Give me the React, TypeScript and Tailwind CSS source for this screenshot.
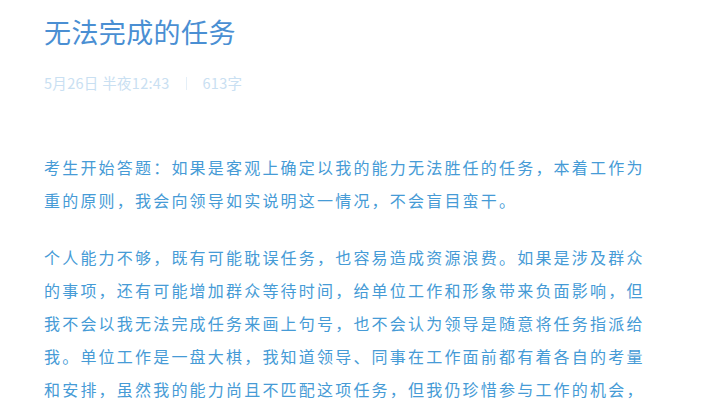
const paragraphs = [
  '考生开始答题：如果是客观上确定以我的能力无法胜任的任务，本着工作为重的原则，我会向领导如实说明这一情况，不会盲目蛮干。',
  '个人能力不够，既有可能耽误任务，也容易造成资源浪费。如果是涉及群众的事项，还有可能增加群众等待时间，给单位工作和形象带来负面影响，但我不会以我无法完成任务来画上句号，也不会认为领导是随意将任务指派给我。单位工作是一盘大棋，我知道领导、同事在工作面前都有着各自的考量和安排，虽然我的能力尚且不匹配这项任务，但我仍珍惜参与工作的机会，会主动向领导请教，提升自己。',
]

export default function App() {
  return (
    <div
      className="h-[400px] w-[716px] overflow-hidden bg-white pl-[44px] pt-[14px]"
      style={{ fontFamily: '"Noto Sans CJK SC", "Noto Sans", sans-serif' }}
    >
      <h1 className="text-[27px] leading-[36px] tracking-[0.4px] text-[#4a8fd3]">
        无法完成的任务
      </h1>
      <div className="mt-[23px] flex items-center text-[14.5px] leading-[20px] tracking-[0.3px] text-[#c9e0f2]">
        <span>5月26日 半夜12:43</span>
        <span className="mx-[16px] h-[13px] w-px bg-[#e4eff8]" />
        <span>613字</span>
      </div>
      <div className="mt-[58px] flex w-[612px] flex-col gap-[24px] text-[16px] leading-[33px] tracking-[2.2px] text-[#469bd6]">
        {paragraphs.map((p, i) => (
          <p key={i}>{p}</p>
        ))}
      </div>
    </div>
  )
}
